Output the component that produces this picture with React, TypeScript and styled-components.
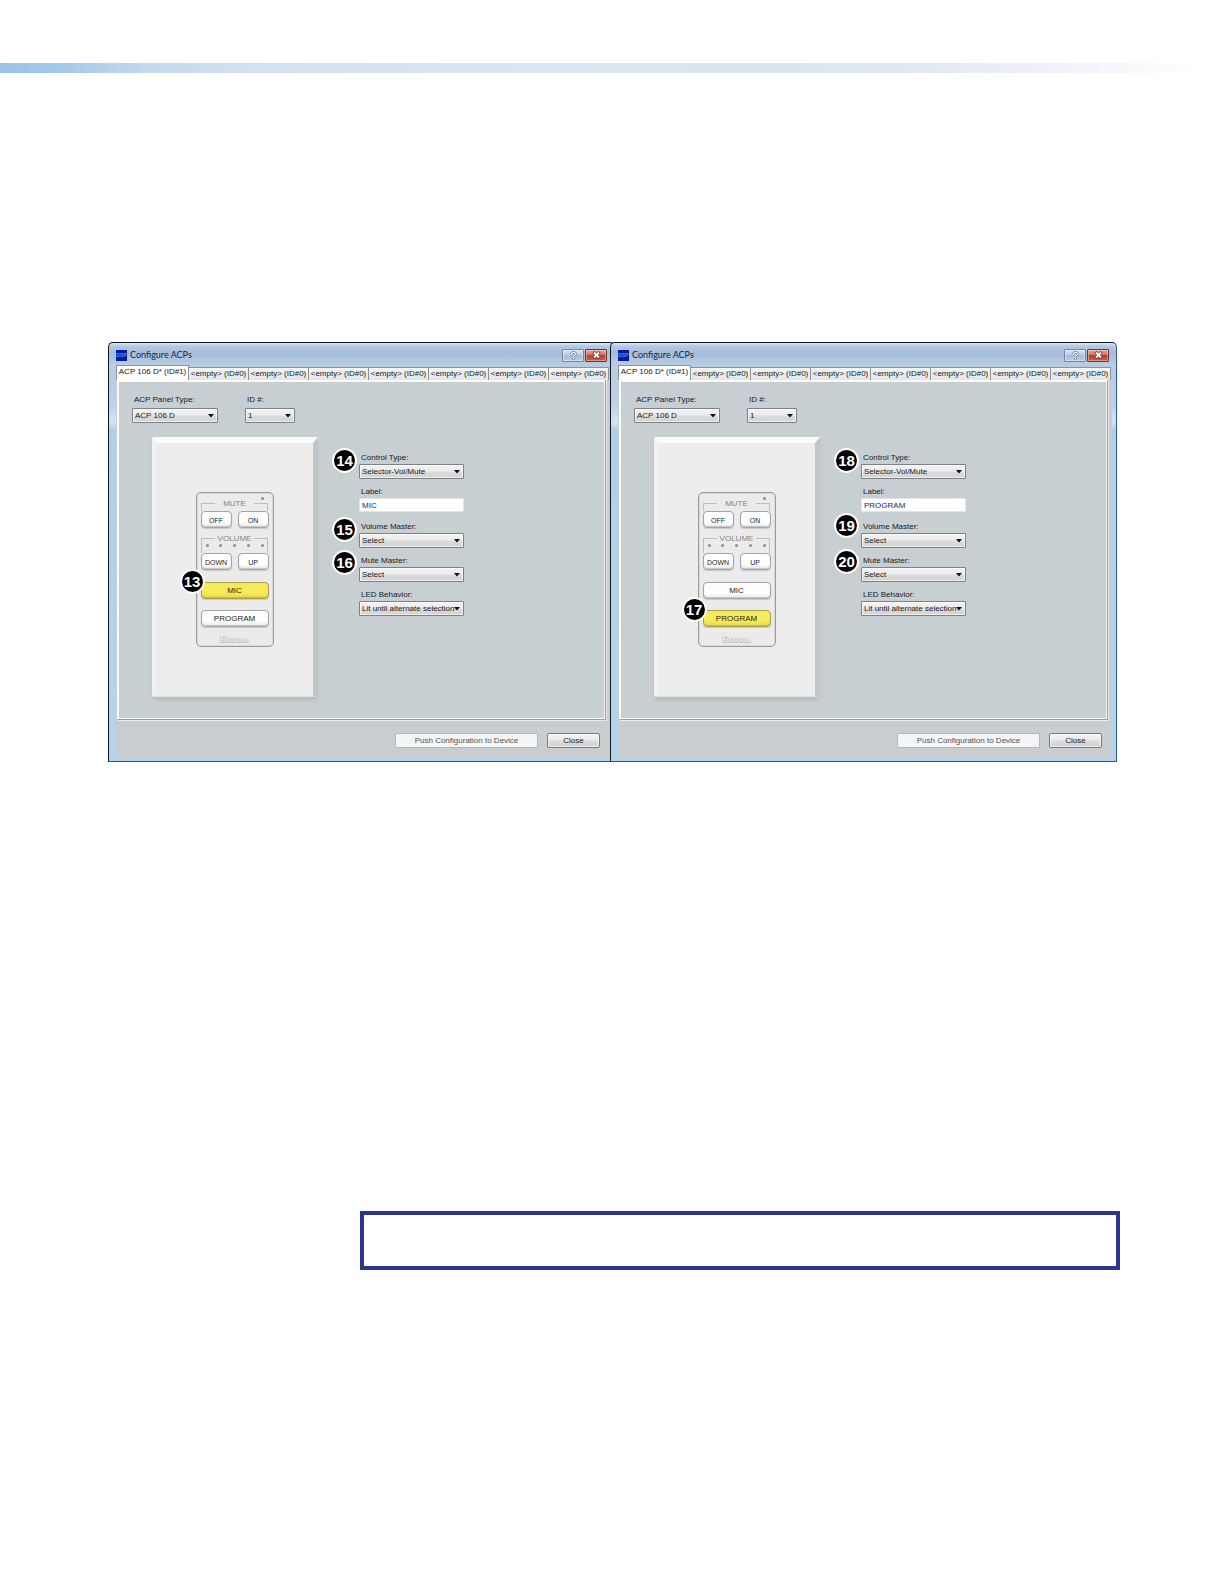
import React, { useId, useState } from "react";
import styled, { createGlobalStyle, css } from "styled-components";

const GlobalStyle = createGlobalStyle`
  *, *::before, *::after { box-sizing: border-box; }
  body { margin: 0; background: #fff; }
  button, input, select { font: inherit; color: inherit; margin: 0; }
`;

const Page = styled.main`
  min-height: 100vh;
  padding-top: 63px;
  background: #fff;
  color: #15191c;
  font-family: "Liberation Sans", Arial, sans-serif;
  font-size: 8px;
  line-height: 12px;
`;

const HeaderRule = styled.div`
  height: 10px;
  background: linear-gradient(
    90deg,
    #9cc3e6 0%,
    #a5c8e8 5%,
    #c3d9ee 12%,
    #d2e1f1 20%,
    #d9e5f2 45%,
    #dae4f1 65%,
    #e6ebf5 78%,
    #f0f1f9 86%,
    #ffffff 98%
  );
`;

const Windows = styled.section`
  display: flex;
  margin: 269px 107px 0 108px;
`;

const Window = styled.article`
  position: relative;
  flex: 1;
  min-width: 0;
  padding: 0 4px 3px 7px;
  border: 1px solid #10161e;
  border-right-color: #2c5a80;
  border-bottom-color: #1a6480;
  border-radius: 5px 5px 0 0;
  background: linear-gradient(
    180deg,
    #dfe9f5 0,
    #b4c9e2 3px,
    #a4bddc 10px,
    #b9cde4 22px,
    #b9d0ea 60px,
    #d3e4f6 80px,
    #b0cfeb 86px,
    #b3d5ec 100%
  );

  & + & {
    margin-left: -5px;
  }
`;

const TitleBar = styled.header`
  display: flex;
  align-items: center;
  height: 22px;
  padding: 2px 3px 0 0;
`;

const AppIcon = styled.span`
  display: flex;
  align-items: center;
  justify-content: center;
  width: 11px;
  height: 11px;
  background: #0618a0;
  color: #3f9bff;
  font: bold 5px/10px "Liberation Sans", sans-serif;
`;

const Title = styled.h2`
  flex: 1;
  margin: 0 0 0 3px;
  font-family: Lato, "Liberation Sans", sans-serif;
  font-size: 9px;
  font-weight: 400;
  line-height: 12px;
  color: #1c2631;
`;

const CaptionButton = styled.button<{ $danger?: boolean }>`
  display: flex;
  align-items: center;
  justify-content: center;
  width: 22px;
  height: 13px;
  margin-left: 1px;
  padding: 0;
  border: 1px solid ${(p) => (p.$danger ? "#7c2f2f" : "#7387a3")};
  border-radius: 1px;
  background: ${(p) =>
    p.$danger
      ? "linear-gradient(180deg, #e3a598 0, #d4705f 45%, #bd3d2b 50%, #cf6149 100%)"
      : "linear-gradient(180deg, #d5e1ef 0, #bccfe4 45%, #a6bedb 50%, #b9cde4 100%)"};
  box-shadow: inset 0 0 0 1px rgba(255, 255, 255, 0.35);
`;

const Client = styled.div`
  background: #c9cdd0;
`;

const Tabs = styled.div`
  display: flex;
  align-items: flex-end;
  height: 15px;
  padding-right: 1px;
  background: #b9cbdd;
`;

const Tab = styled.button<{ $active?: boolean }>`
  height: 13px;
  padding: 0;
  border: 1px solid #8a9399;
  border-width: 1px 1px 0 0;
  font-size: 8px;
  line-height: 12px;
  white-space: nowrap;
  ${(p) =>
    p.$active
      ? css`
          flex: none;
          width: 73px;
          height: 15px;
          padding-bottom: 2px;
          border-left-width: 1px;
          background: #fff;
        `
      : css`
          flex: 1;
          min-width: 0;
          background: linear-gradient(180deg, #f3f4f4, #e2e5e6);
        `}
`;

const Panel = styled.div`
  margin: 0 4px 0 1px;
  padding: 13px 14px 22px;
  border: 1px solid #fff;
  border-right-color: #949ea3;
  border-bottom-color: #949ea3;
  background: #c8cfd2;
  box-shadow: inset 0 0 0 1px #f6f8f8, 1px 1px 0 #e9eced;
`;

const TypeRow = styled.div`
  display: flex;
  gap: 27px;
`;

const Body = styled.div`
  display: flex;
  align-items: flex-start;
  gap: 41px;
  margin: 14px 0 0 20px;
`;

const FieldBox = styled.div<{ $width: number; $tall?: boolean }>`
  position: relative;
  display: flex;
  flex-direction: column;
  gap: ${(p) => (p.$tall ? 2 : 0)}px;
  width: ${(p) => p.$width}px;
`;

const FieldLabel = styled.label`
  padding-left: 2px;
  line-height: 12px;
  white-space: nowrap;
`;

const SelectBox = styled.span`
  position: relative;
  display: flex;

  svg {
    position: absolute;
    top: 6px;
    right: 4px;
    pointer-events: none;
  }
`;

const SelectControl = styled.select`
  appearance: none;
  width: 100%;
  height: 15px;
  padding: 0 8px 0 2px;
  border: 1px solid #7b8185;
  border-radius: 1px;
  background: linear-gradient(180deg, #f3f3f3 0, #ebebeb 48%, #dcdcdc 52%, #d2d3d3 100%);
  box-shadow: inset 0 0 0 1px rgba(255, 255, 255, 0.6);
  line-height: 12px;
`;

const TextControl = styled.input`
  width: 100%;
  height: 14px;
  margin-bottom: 2px;
  padding: 0 2px;
  border: 1px solid #dfe4e6;
  background: #fff;
  color: #2a2a55;
  line-height: 12px;
`;

const Fields = styled.div`
  display: flex;
  flex-direction: column;
  gap: 7px;
  margin-top: 15px;
`;

const Badge = styled.span<{ $left: number; $top: number }>`
  position: absolute;
  z-index: 1;
  left: ${(p) => p.$left}px;
  top: ${(p) => p.$top}px;
  display: flex;
  align-items: center;
  justify-content: center;
  width: 25px;
  height: 25px;
  border: 2px solid #fff;
  border-radius: 50%;
  background: #000;
  color: #fff;
  font: bold 15px/16px "Liberation Sans", Arial, sans-serif;
`;

const Faceplate = styled.div`
  flex: none;
  width: 166px;
  height: 260px;
  padding-top: 49px;
  border: solid;
  border-width: 6px 5px 1px 4px;
  border-color: #f9fbfb #c0c5c7 #e2e4e5 #f1f2f3;
  border-radius: 2px 0 0 2px;
  background: #ededed;
  box-shadow: 0 4px 4px -1px #b4babc;
`;

const Keypad = styled.div`
  width: 78px;
  height: 155px;
  margin: 0 auto;
  padding: 0 4px;
  border: 1px solid #9a9a9a;
  border-radius: 5px;
  background: #ebebeb;
  box-shadow: inset 0 0 0 1px #dadada;
`;

const Legend = styled.div<{ $height: number }>`
  position: relative;
  display: flex;
  justify-content: space-between;
  height: ${(p) => p.$height}px;
  padding-top: 6px;
  color: #858585;
  line-height: 10px;

  &::before,
  &::after {
    content: "";
    width: 14px;
    margin-top: 4px;
    border: solid #bdbdbd;
    border-width: 1px 0 0 1px;
  }

  &::after {
    border-width: 1px 1px 0 0;
  }
`;

const Leds = styled.span<{ $top: number }>`
  position: absolute;
  top: ${(p) => p.$top}px;
  left: 5px;
  right: 5px;
  display: flex;
  justify-content: space-between;
`;

const Led = styled.i`
  width: 3px;
  height: 3px;
  margin-left: auto;
  border-radius: 50%;
  background: #8c8c8c;

  &:first-child:not(:last-child) {
    margin-left: 0;
  }
`;

const KeyRow = styled.div`
  display: flex;
  gap: 6px;
`;

const Key = styled.button<{ $lit?: boolean; $small?: boolean }>`
  flex: 1;
  min-width: 0;
  height: 17px;
  padding: ${(p) => (p.$small ? 2 : 1)}px 0 0;
  border: 1px solid ${(p) => (p.$lit ? "#aaa04c" : "#a5a5a5")};
  border-radius: 4px;
  background: ${(p) =>
    p.$lit ? "linear-gradient(180deg, #f3e95f, #f7ec58 60%, #e8da45)" : "linear-gradient(180deg, #fdfdfd, #fff 65%, #e9e9e9)"};
  box-shadow: inset 0 -1px 1px ${(p) => (p.$lit ? "#c9bc3c" : "#c6c6c6")}, 0 1px 1px #c9c9c9;
  color: #1d1d1d;
  font-size: ${(p) => (p.$small ? 7 : 8)}px;
  line-height: 12px;
`;

const WideKey = styled.div<{ $gap: number }>`
  position: relative;
  display: flex;
  margin-top: ${(p) => p.$gap}px;
`;

const Brand = styled.div`
  margin-top: 7px;
  color: #f6f6f6;
  font: bold 9px/10px "Liberation Serif", serif;
  text-align: center;
  text-shadow: 0 0 1px #8a8a8a, 0 1px 0 #b4b4b4;
`;

const Footer = styled.footer`
  display: flex;
  justify-content: flex-end;
  gap: 9px;
  padding: 13px 10px 10px;
`;

const Push = styled.button`
  width: 143px;
  height: 15px;
  padding: 0;
  border: 1px solid #b1b8bb;
  border-radius: 1px;
  background: #f3f4f5;
  color: #4c545c;
  line-height: 12px;
`;

const Close = styled.button`
  width: 53px;
  height: 15px;
  padding: 0;
  border: 1px solid #757b80;
  border-radius: 2px;
  background: linear-gradient(180deg, #f3f3f3 0, #ebebeb 48%, #dcdcdc 52%, #d0d1d1 100%);
  box-shadow: inset 0 0 0 1px rgba(255, 255, 255, 0.6);
  line-height: 12px;
`;

const Note = styled.aside`
  height: 59px;
  margin: 449px 104px 0 360px;
  border: 4px solid #2b3591;
`;

type BadgeSpec = { n: number; top: number };

function SelectField(props: { label: string; value: string; width: number; tall?: boolean; badge?: BadgeSpec }) {
  const id = useId();
  return (
    <FieldBox $width={props.width} $tall={props.tall}>
      {props.badge && (
        <Badge $left={-27} $top={props.badge.top}>
          {props.badge.n}
        </Badge>
      )}
      <FieldLabel htmlFor={id}>{props.label}</FieldLabel>
      <SelectBox>
        <SelectControl id={id}>
          <option>{props.value}</option>
        </SelectControl>
        <svg width="6" height="4" viewBox="0 0 6 4" aria-hidden="true">
          <path d="M0 0h6L3 3.5z" fill="#111" />
        </svg>
      </SelectBox>
    </FieldBox>
  );
}

function LabelField({ initial }: { initial: string }) {
  const id = useId();
  const [value, setValue] = useState(initial);
  return (
    <FieldBox $width={105}>
      <FieldLabel htmlFor={id}>Label:</FieldLabel>
      <TextControl id={id} value={value} onChange={(e) => setValue(e.target.value)} />
    </FieldBox>
  );
}

type Config = {
  lit: "MIC" | "PROGRAM";
  keyBadge: number;
  control: BadgeSpec;
  volume: BadgeSpec;
  mute: BadgeSpec;
};

const configs: Config[] = [
  { lit: "MIC", keyBadge: 13, control: { n: 14, top: -4 }, volume: { n: 15, top: -4 }, mute: { n: 16, top: -5 } },
  { lit: "PROGRAM", keyBadge: 17, control: { n: 18, top: -4 }, volume: { n: 19, top: -8 }, mute: { n: 20, top: -6 } },
];

const emptyTabs = [2, 3, 4, 5, 6, 7, 8];

function WallPanel({ lit, keyBadge }: Config) {
  return (
    <Faceplate>
      <Keypad>
        <Legend $height={18}>
          MUTE
          <Leds $top={4}>
            <Led />
          </Leds>
        </Legend>
        <KeyRow>
          <Key $small>OFF</Key>
          <Key $small>ON</Key>
        </KeyRow>
        <Legend $height={25}>
          VOLUME
          <Leds $top={16}>
            {[1, 2, 3, 4, 5].map((n) => (
              <Led key={n} />
            ))}
          </Leds>
        </Legend>
        <KeyRow>
          <Key $small>DOWN</Key>
          <Key $small>UP</Key>
        </KeyRow>
        {(["MIC", "PROGRAM"] as const).map((name, i) => (
          <WideKey key={name} $gap={12 - i}>
            {lit === name && (
              <Badge $left={-21} $top={-13}>
                {keyBadge}
              </Badge>
            )}
            <Key $lit={lit === name}>{name}</Key>
          </WideKey>
        ))}
        <Brand>Extron.</Brand>
      </Keypad>
    </Faceplate>
  );
}

function ConfigureWindow(config: Config) {
  return (
    <Window>
      <TitleBar>
        <AppIcon>DSP</AppIcon>
        <Title>Configure ACPs</Title>
        <CaptionButton aria-label="Help">
          <svg width="7" height="9" viewBox="0 0 7 9" aria-hidden="true">
            <path d="M1.5 3C1.5 0.8 5.5 0.8 5.5 3C5.5 4.4 3.5 4.2 3.5 6M3.5 7v1.4" fill="none" stroke="#4f5f78" strokeWidth="2.2" />
            <path d="M1.5 3C1.5 0.8 5.5 0.8 5.5 3C5.5 4.4 3.5 4.2 3.5 6M3.5 7v1.2" fill="none" stroke="#fff" strokeWidth="1.1" />
          </svg>
        </CaptionButton>
        <CaptionButton $danger aria-label="Close window">
          <svg width="9" height="8" viewBox="0 0 9 8" aria-hidden="true">
            <path d="M1.5 1l6 6M7.5 1l-6 6" stroke="#6b3030" strokeWidth="3" />
            <path d="M2 1.5l5 5M7 1.5l-5 5" stroke="#fff" strokeWidth="1.8" />
          </svg>
        </CaptionButton>
      </TitleBar>
      <Client>
        <Tabs role="tablist">
          <Tab role="tab" aria-selected $active>
            ACP 106 D* (ID#1)
          </Tab>
          {emptyTabs.map((n) => (
            <Tab key={n} role="tab" aria-selected={false}>
              &lt;empty&gt; (ID#0)
            </Tab>
          ))}
        </Tabs>
        <Panel>
          <TypeRow>
            <SelectField label="ACP Panel Type:" value="ACP 106 D" width={86} tall />
            <SelectField label="ID #:" value="1" width={50} tall />
          </TypeRow>
          <Body>
            <WallPanel {...config} />
            <Fields>
              <SelectField label="Control Type:" value="Selector-Vol/Mute" width={105} badge={config.control} />
              <LabelField initial={config.lit} />
              <SelectField label="Volume Master:" value="Select" width={105} badge={config.volume} />
              <SelectField label="Mute Master:" value="Select" width={105} badge={config.mute} />
              <SelectField label="LED Behavior:" value="Lit until alternate selection" width={105} />
            </Fields>
          </Body>
        </Panel>
        <Footer>
          <Push disabled>Push Configuration to Device</Push>
          <Close>Close</Close>
        </Footer>
      </Client>
    </Window>
  );
}

export default function App() {
  return (
    <>
      <GlobalStyle />
      <Page>
        <HeaderRule />
        <Windows>
          {configs.map((config) => (
            <ConfigureWindow key={config.keyBadge} {...config} />
          ))}
        </Windows>
        <Note />
      </Page>
    </>
  );
}
